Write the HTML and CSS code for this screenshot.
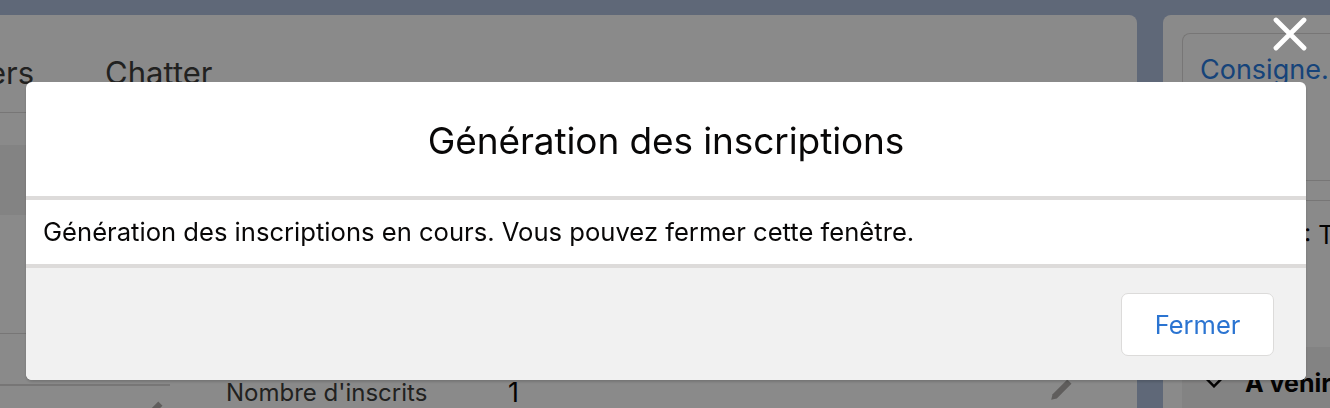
FILE: index.html
```html
<!DOCTYPE html>
<html lang="fr">
<head>
<meta charset="utf-8">
<title>Génération des inscriptions</title>
<link rel="stylesheet" href="styles.css">
</head>
<body>
<div class="page">
  <main class="main-card">
    <nav class="tabs">
      <span class="tab tab-cut">ers</span>
      <span class="tab">Chatter</span>
    </nav>
    <div class="section-head"></div>
    <div class="section-body"></div>
    <div class="field-row">
      <div class="field-left">
        <svg class="pencil pencil-left" viewBox="0 0 20 20" aria-hidden="true"><path d="M14.5 2.5l3 3L7 16l-4 1 1-4z" /></svg>
      </div>
      <div class="field-right">
        <span class="field-label">Nombre d'inscrits</span>
        <span class="field-value">1</span>
        <svg class="pencil pencil-right" viewBox="0 0 20 20" aria-hidden="true"><path d="M14.5 2.5l3 3L7 16l-4 1 1-4z" /></svg>
      </div>
    </div>
  </main>
  <aside class="side-card">
    <div class="side-inner">
      <a class="side-link" href="#">Consigne...</a>
    </div>
    <div class="side-rule"></div>
    <div class="side-text">: T</div>
    <div class="side-section">
      <svg class="chevron" viewBox="0 0 24 14" aria-hidden="true"><path d="M2 2l10 10L22 2" /></svg>
      <span class="side-section-title">A venir</span>
    </div>
  </aside>
</div>

<div class="backdrop"></div>

<button class="modal-close" type="button" aria-label="Fermer">
  <svg viewBox="0 0 34 34" aria-hidden="true"><path d="M3 3L31 31M31 3L3 31" /></svg>
</button>

<section class="modal" role="dialog" aria-labelledby="modal-title">
  <header class="modal-header">
    <h2 id="modal-title" class="modal-title">Génération des inscriptions</h2>
  </header>
  <div class="modal-content">
    <p class="modal-text">Génération des inscriptions en cours. Vous pouvez fermer cette fenêtre.</p>
  </div>
  <footer class="modal-footer">
    <button class="btn-neutral" type="button">Fermer</button>
  </footer>
</section>
</body>
</html>
```

FILE: styles.css
```css
html, body {
  margin: 0;
  padding: 0;
}

body {
  width: 1330px;
  height: 408px;
  overflow: hidden;
  background: #b0c1de;
  font-family: Inter, "Noto Sans", "Liberation Sans", sans-serif;
  color: #3e3e3c;
}

.page {
  display: flex;
  gap: 26px;
  padding-top: 15px;
  height: 393px;
}

.main-card {
  width: 1137px;
  flex: none;
  background: #fff;
  border-top-right-radius: 8px;
  display: flex;
  flex-direction: column;
  overflow: hidden;
}

.main-card > * {
  flex-shrink: 0;
}

.tabs {
  box-sizing: border-box;
  height: 98px;
  border-bottom: 1px solid #dddbda;
  display: flex;
  gap: 71px;
  padding-top: 40px;
}

.tab {
  font-size: 31px;
  line-height: 36px;
  color: #3e3e3c;
  white-space: nowrap;
}

.tab-cut {
  margin-left: -12px;
}

.section-head {
  margin-top: 32px;
  height: 70px;
  background: #f3f2f2;
}

.section-body {
  height: 118px;
  border-bottom: 1px solid #dddbda;
}

.field-row {
  display: flex;
  margin-top: 50px;
}

.field-left {
  width: 170px;
  height: 30px;
  border-top: 2px solid #dddbda;
  position: relative;
}

.field-right {
  flex: 1;
  display: flex;
  align-items: flex-start;
  padding-left: 56px;
  margin-top: -6px;
}

.field-label {
  font-size: 24px;
  line-height: 30px;
  width: 282px;
  color: #3e3e3c;
  white-space: nowrap;
}

.field-value {
  font-size: 27px;
  line-height: 30px;
  color: #080707;
}

.pencil {
  width: 28px;
  height: 28px;
  fill: #b0adab;
}

.pencil-left {
  position: absolute;
  left: 138px;
  top: 12px;
}

.pencil-right {
  margin-left: 528px;
  margin-top: -2px;
}

.side-card {
  flex: 1;
  background: #fff;
  border-top-left-radius: 8px;
  padding: 18px 0 0 19px;
  display: flex;
  flex-direction: column;
  overflow: hidden;
}

.side-card > * {
  flex-shrink: 0;
}

.side-inner {
  border: 1px solid #dddbda;
  border-right: none;
  border-radius: 8px 0 0 8px;
  height: 148px;
  padding: 19px 0 0 17px;
  box-sizing: border-box;
  overflow: hidden;
  white-space: nowrap;
}

.side-link {
  font-size: 27px;
  line-height: 34px;
  color: #2a7de1;
  text-decoration: none;
}

.side-rule {
  margin-top: 19px;
  border-top: 1px solid #dddbda;
}

.side-text {
  font-size: 25px;
  line-height: 30px;
  margin-top: 19px;
  padding-left: 122px;
  color: #080707;
  white-space: nowrap;
}

.side-section {
  margin-top: 97px;
  flex: 1 0 auto;
  background: #f3f2f2;
  display: flex;
  align-items: flex-start;
  gap: 20px;
  padding: 22px 0 0 21px;
  white-space: nowrap;
}

.chevron {
  flex: none;
  width: 22px;
  height: 12px;
  fill: none;
  stroke: #080707;
  stroke-width: 3;
  margin-top: 7px;
}

.side-section-title {
  font-size: 25px;
  font-weight: 700;
  line-height: 28px;
  color: #080707;
}

.backdrop {
  position: fixed;
  inset: 0;
  background: rgba(0, 0, 0, 0.46);
}

.modal-close {
  position: fixed;
  left: 1273px;
  top: 17px;
  width: 34px;
  height: 34px;
  padding: 0;
  border: 0;
  background: transparent;
}

.modal-close svg {
  display: block;
  width: 34px;
  height: 34px;
  stroke: #fff;
  stroke-width: 4.8;
  stroke-linecap: round;
}

.modal {
  position: fixed;
  left: 26px;
  top: 82px;
  width: 1280px;
  border-radius: 6px;
  overflow: hidden;
  background: #fff;
  box-shadow: 0 2px 3px rgba(0, 0, 0, 0.16);
}

.modal-header {
  height: 114px;
  display: flex;
  align-items: center;
  justify-content: center;
  border-bottom: 4px solid #dddbda;
}

.modal-title {
  margin: 0;
  padding-top: 4px;
  font-size: 37px;
  font-weight: 400;
  line-height: 44px;
  color: #080707;
  letter-spacing: -0.1px;
}

.modal-content {
  height: 64px;
  display: flex;
  align-items: center;
  padding: 0 17px;
}

.modal-text {
  margin: 0;
  font-size: 25.6px;
  line-height: 32px;
  color: #080707;
  white-space: nowrap;
}

.modal-footer {
  height: 116px;
  box-sizing: border-box;
  border-top: 4px solid #dddbda;
  background: #f1f1f1;
  display: flex;
  align-items: center;
  justify-content: flex-end;
  padding: 0 32px;
}

.btn-neutral {
  width: 153px;
  height: 63px;
  border: 1.5px solid #dcdbda;
  border-radius: 7px;
  background: #fff;
  font-family: inherit;
  font-size: 25.5px;
  color: #2b74d1;
}
```
